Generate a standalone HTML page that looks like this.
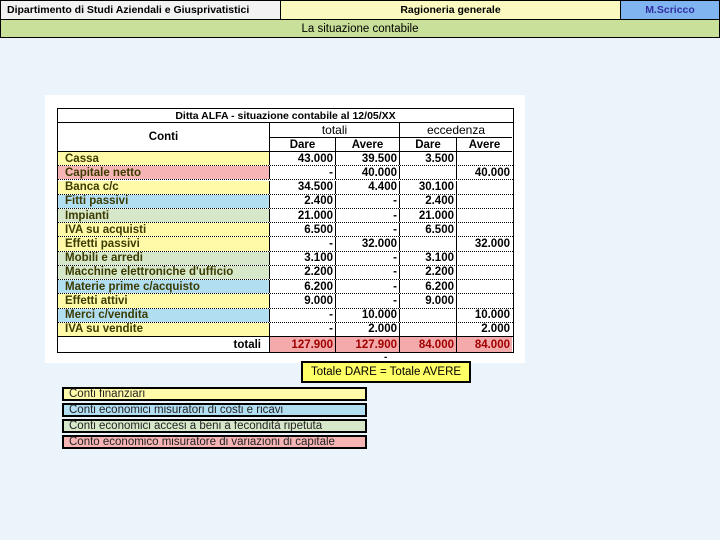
<!DOCTYPE html>
<html><head><meta charset="utf-8"><style>
*{margin:0;padding:0;box-sizing:border-box}
body{width:720px;height:540px;background:#ebf3fb;position:relative;overflow:hidden;font-family:"Liberation Sans","DejaVu Sans",sans-serif}
.a{position:absolute}
.hb{font-weight:bold;font-size:10.5px;display:flex;align-items:center;border:1px solid #000}
#tbl{left:57px;top:108px;width:457px;height:245px;border:1.5px solid #000;background:#fff;font-weight:bold;font-size:11.5px}
.row{position:absolute;left:0;width:100%;display:flex;border-bottom:1px dotted #000}
.row div{height:100%;display:flex;align-items:center}
.c0{width:212px;padding-left:7px;color:#3b3b00;border-right:1px solid #000}
.n{justify-content:flex-end;padding-right:2px;border-right:1px solid #000}
.c1{width:66px}.c2{width:64px}.c3{width:57px}.c4{width:55px;border-right:none!important}
.y{background:#fffaa8}.p{background:#f6b4b4}.b{background:#b2def2}.g{background:#d6e8c9}
.lg{position:absolute;left:62px;width:305px;height:14px;border:2px solid #000;font-size:11.5px;line-height:11px;padding-left:5px;color:#222;overflow:visible}
.lg span{position:relative;top:0px}
</style></head><body>
<div class="a hb" style="left:0;top:0;width:281px;height:20px;background:#f2f2f2;padding-left:6px">Dipartimento di Studi Aziendali e Giusprivatistici</div>
<div class="a hb" style="left:280px;top:0;width:341px;height:20px;background:#fafac0;justify-content:center">Ragioneria generale</div>
<div class="a hb" style="left:620px;top:0;width:100px;height:20px;background:#80b4f0;color:#3030a0;justify-content:center">M.Scricco</div>
<div class="a hb" style="left:0;top:19px;width:720px;height:19px;background:#c8e09a;justify-content:center;font-weight:normal;font-size:11.5px">La situazione contabile</div>

<div class="a" style="left:45px;top:95px;width:480px;height:268px;background:#fff"></div>
<div class="a" id="tbl">
<div class="a" style="left:0;top:0;width:100%;height:14px;border-bottom:1px solid #000;text-align:center;font-size:10.5px;line-height:14px">Ditta ALFA - situazione contabile al 12/05/XX</div>
<div class="a" style="left:0;top:14px;width:212px;height:29px;border-right:1px solid #000;border-bottom:1px solid #000;text-align:center;line-height:29px">Conti</div>
<div class="a" style="left:212px;top:14px;width:130px;height:15px;border-right:1px solid #000;border-bottom:1px solid #000;text-align:center;font-weight:normal;font-size:12px;line-height:15px">totali</div>
<div class="a" style="left:342px;top:14px;width:112px;height:15px;border-bottom:1px solid #000;text-align:center;font-weight:normal;font-size:12px;line-height:15px">eccedenza</div>
<div class="a" style="left:212px;top:29px;width:66px;height:14px;border-right:1px solid #000;border-bottom:1px solid #000;text-align:center;line-height:14px">Dare</div>
<div class="a" style="left:278px;top:29px;width:64px;height:14px;border-right:1px solid #000;border-bottom:1px solid #000;text-align:center;line-height:14px">Avere</div>
<div class="a" style="left:342px;top:29px;width:57px;height:14px;border-right:1px solid #000;border-bottom:1px solid #000;text-align:center;line-height:14px">Dare</div>
<div class="a" style="left:399px;top:29px;width:55px;height:14px;border-bottom:1px solid #000;text-align:center;line-height:14px">Avere</div>

<div class="row" style="top:43px;height:14.23px"><div class="c0 y">Cassa</div><div class="n c1">43.000</div><div class="n c2">39.500</div><div class="n c3">3.500</div><div class="n c4"></div></div>
<div class="row" style="top:57.2px;height:14.23px"><div class="c0 p">Capitale netto</div><div class="n c1">-</div><div class="n c2">40.000</div><div class="n c3"></div><div class="n c4">40.000</div></div>
<div class="row" style="top:71.5px;height:14.23px"><div class="c0 y">Banca c/c</div><div class="n c1">34.500</div><div class="n c2">4.400</div><div class="n c3">30.100</div><div class="n c4"></div></div>
<div class="row" style="top:85.7px;height:14.23px"><div class="c0 b">Fitti passivi</div><div class="n c1">2.400</div><div class="n c2">-</div><div class="n c3">2.400</div><div class="n c4"></div></div>
<div class="row" style="top:99.9px;height:14.23px"><div class="c0 g">Impianti</div><div class="n c1">21.000</div><div class="n c2">-</div><div class="n c3">21.000</div><div class="n c4"></div></div>
<div class="row" style="top:114.2px;height:14.23px"><div class="c0 y">IVA su acquisti</div><div class="n c1">6.500</div><div class="n c2">-</div><div class="n c3">6.500</div><div class="n c4"></div></div>
<div class="row" style="top:128.4px;height:14.23px"><div class="c0 y">Effetti passivi</div><div class="n c1">-</div><div class="n c2">32.000</div><div class="n c3"></div><div class="n c4">32.000</div></div>
<div class="row" style="top:142.6px;height:14.23px"><div class="c0 g">Mobili e arredi</div><div class="n c1">3.100</div><div class="n c2">-</div><div class="n c3">3.100</div><div class="n c4"></div></div>
<div class="row" style="top:156.8px;height:14.23px"><div class="c0 g">Macchine elettroniche d'ufficio</div><div class="n c1">2.200</div><div class="n c2">-</div><div class="n c3">2.200</div><div class="n c4"></div></div>
<div class="row" style="top:171.1px;height:14.23px"><div class="c0 b">Materie prime c/acquisto</div><div class="n c1">6.200</div><div class="n c2">-</div><div class="n c3">6.200</div><div class="n c4"></div></div>
<div class="row" style="top:185.3px;height:14.23px"><div class="c0 y">Effetti attivi</div><div class="n c1">9.000</div><div class="n c2">-</div><div class="n c3">9.000</div><div class="n c4"></div></div>
<div class="row" style="top:199.5px;height:14.23px"><div class="c0 b">Merci c/vendita</div><div class="n c1">-</div><div class="n c2">10.000</div><div class="n c3"></div><div class="n c4">10.000</div></div>
<div class="row" style="top:213.8px;height:14.23px;border-bottom:1px solid #000"><div class="c0 y">IVA su vendite</div><div class="n c1">-</div><div class="n c2">2.000</div><div class="n c3"></div><div class="n c4">2.000</div></div>
<div class="row" style="top:228px;height:15px;border-bottom:none;color:#a00000"><div class="c0" style="justify-content:flex-end;padding-right:8px;color:#000;background:#fff">totali</div><div class="n c1" style="background:#f4aaaa">127.900</div><div class="n c2" style="background:#f4aaaa">127.900</div><div class="n c3" style="background:#f4aaaa">84.000</div><div class="n c4" style="background:#f4aaaa">84.000</div></div>
</div>
<div class="a" style="left:384px;top:352px;font-size:10px;font-weight:bold">-</div>
<div class="a" style="left:301px;top:361px;width:170px;height:22px;background:#ffff66;border:2px solid #000;font-size:11.5px;text-align:center;line-height:18px">Totale DARE = Totale AVERE</div>

<div class="lg" style="top:387px;background:#fffaa8"><span>Conti finanziari</span></div>
<div class="lg" style="top:403px;background:#b2def2"><span>Conti economici misuratori di costi e ricavi</span></div>
<div class="lg" style="top:419px;background:#d6e8c9"><span>Conti economici accesi a beni a fecondità ripetuta</span></div>
<div class="lg" style="top:435px;background:#f6b4b4"><span>Conto economico misuratore di variazioni di capitale</span></div>
</body></html>
